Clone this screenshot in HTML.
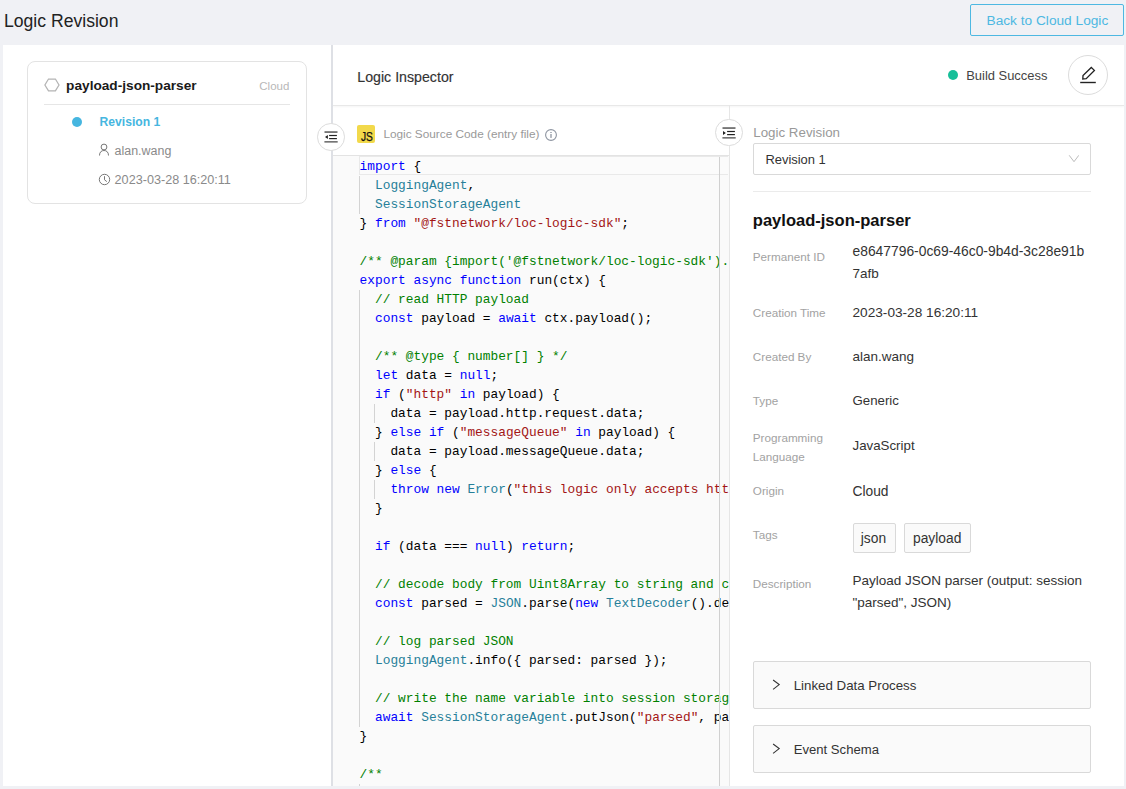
<!DOCTYPE html>
<html><head><meta charset="utf-8">
<style>
*{box-sizing:border-box;margin:0;padding:0}
html,body{width:1126px;height:789px;overflow:hidden;background:#f0f1f5;font-family:"Liberation Sans",sans-serif;color:#333}
.a{position:absolute}
.t{white-space:nowrap;line-height:1}
.code{font-family:"Liberation Mono",monospace;font-size:12.83px;line-height:19px;white-space:pre;color:#000}
.k{color:#0000ff}.c{color:#008000}.s{color:#a31515}.y{color:#267f99}
</style></head><body>
<div class="a t " style="left:4px;top:12.90px;font-size:17.6px;color:#222;">Logic Revision</div>
<div class="a" style="left:970px;top:4px;width:154px;height:32px;border:1px solid #4db8e2;border-radius:2px"></div>
<div class="a t " style="left:986.5px;top:14.20px;font-size:13.7px;color:#4db8e2;">Back to Cloud Logic</div>
<div class="a" style="left:3px;top:45px;width:328px;height:741px;background:#fff"></div>
<div class="a" style="left:331px;top:45px;width:2px;height:741px;background:#dee0e5"></div>
<div class="a" style="left:333px;top:45px;width:791px;height:741px;background:#fff"></div>
<div class="a" style="left:27px;top:61px;width:280px;height:143px;border:1px solid #e3e3e3;border-radius:8px"></div>
<svg class="a" style="left:44px;top:78px" width="16" height="14" viewBox="0 0 16 14"><path d="M4.5 1.0 L11.4 1.0 L15.0 7 L11.4 12.9 L4.5 12.9 L0.9 7 Z" fill="none" stroke="#b4b4b4" stroke-width="1.25"/></svg>
<div class="a t " style="left:66.1px;top:79.34px;font-size:13.66px;color:#1a1a1a;font-weight:bold;">payload-json-parser</div>
<div class="a t " style="left:259.3px;top:81.17px;font-size:11.5px;color:#b8b8b8;">Cloud</div>
<div class="a" style="left:44px;top:104px;width:246px;height:1px;background:#e6e6e6"></div>
<div class="a" style="left:71.8px;top:116.7px;width:10px;height:10px;background:#46b6e0;border-radius:50%"></div>
<div class="a t " style="left:99.6px;top:116.02px;font-size:12.14px;color:#46b6e0;font-weight:bold;">Revision 1</div>
<svg class="a" style="left:98px;top:143px" width="12" height="13" viewBox="0 0 12 13"><circle cx="6" cy="4" r="2.9" fill="none" stroke="#777" stroke-width="1"/><path d="M1.5 12.5 C1.5 9 3.5 7.5 6 7.5 C8.5 7.5 10.5 9 10.5 12.5" fill="none" stroke="#777" stroke-width="1"/></svg>
<div class="a t " style="left:114.6px;top:145.47px;font-size:12.44px;color:#8a8a8a;">alan.wang</div>
<svg class="a" style="left:98px;top:172.5px" width="13" height="13" viewBox="0 0 13 13"><circle cx="6.5" cy="6.5" r="5.2" fill="none" stroke="#777" stroke-width="1"/><path d="M6.5 3.2 V6.8 L8.8 8.6" fill="none" stroke="#777" stroke-width="1"/></svg>
<div class="a t " style="left:114.6px;top:174.20px;font-size:12.64px;color:#8a8a8a;">2023-03-28 16:20:11</div>
<div class="a t " style="left:357.3px;top:70.28px;font-size:14.2px;color:#333;-webkit-text-stroke:0.15px #333">Logic Inspector</div>
<div class="a" style="left:333px;top:105px;width:791px;height:1px;background:#e8e8e8;box-shadow:0 1px 2px rgba(0,0,0,0.06)"></div>
<div class="a" style="left:947.9px;top:69.9px;width:10px;height:10px;background:#17bf99;border-radius:50%"></div>
<div class="a t " style="left:966.2px;top:70.05px;font-size:12.94px;color:#444;">Build Success</div>
<div class="a" style="left:1068px;top:55px;width:40px;height:40px;border:1px solid #dcdcdc;border-radius:50%;background:#fff"></div>
<svg class="a" style="left:1078px;top:65px" width="20" height="20" viewBox="0 0 20 20"><path d="M4.8 14.0 L5.0 10.6 L13.3 2.5 L16.4 5.4 L8.2 13.6 Z" fill="none" stroke="#222" stroke-width="1.3" stroke-linejoin="miter"/><path d="M2.2 17.5 H17.8" stroke="#222" stroke-width="1.4"/></svg>
<div class="a" style="left:356.9px;top:125px;width:18px;height:18px;background:#f2d94b;border-radius:2px"></div>
<div class="a t " style="left:360.7px;top:130.57px;font-size:12.2px;color:#111;transform:scaleX(0.84);transform-origin:0 0;-webkit-text-stroke:0.25px #111">JS</div>
<div class="a t " style="left:383.4px;top:128.81px;font-size:11.8px;color:#999;">Logic Source Code (entry file)</div>
<svg class="a" style="left:545px;top:129px" width="12" height="12" viewBox="0 0 12 12"><circle cx="6" cy="6" r="5.4" fill="none" stroke="#8e95a1" stroke-width="1.1"/><rect x="5.3" y="3.0" width="1.4" height="1.0" fill="#8e95a1"/><rect x="5.35" y="5.0" width="1.3" height="3.9" fill="#8e95a1"/></svg>
<div class="a" style="left:333px;top:155px;width:396px;height:631px;background:#fafafa"></div>
<div class="a" style="left:333px;top:155px;width:396px;height:1.2px;background:#e3e3e3"></div>
<div class="a" style="left:359px;top:156px;width:369px;height:18.5px;border:1.6px solid #e9e9e9;border-right:none;background:#fbfbfb"></div>
<div class="a" style="left:333px;top:157px;width:396px;height:629px;overflow:hidden"><div class="a" style="left:26.0px;top:18.69999999999999px;width:1px;height:38px;background:#d3d3d3"></div>
<div class="a" style="left:26.0px;top:132.7px;width:1px;height:437px;background:#d3d3d3"></div>
<div class="a" style="left:41.39999999999998px;top:246.7px;width:1px;height:19px;background:#d3d3d3"></div>
<div class="a" style="left:41.39999999999998px;top:284.7px;width:1px;height:19px;background:#d3d3d3"></div>
<div class="a" style="left:41.39999999999998px;top:322.7px;width:1px;height:19px;background:#d3d3d3"></div>
<div class="a" style="left:26.0px;top:626.7px;width:1px;height:19px;background:#d3d3d3"></div>
<div class="a code" style="left:26.600000000000023px;top:-0.30000000000001137px"><span class="k">import</span> {
  <span class="y">LoggingAgent</span>,
  <span class="y">SessionStorageAgent</span>
} <span class="k">from</span> <span class="s">"@fstnetwork/loc-logic-sdk"</span>;

<span class="c">/** @param {import('@fstnetwork/loc-logic-sdk').</span>
<span class="k">export</span> <span class="k">async</span> <span class="k">function</span> run(ctx) {
  <span class="c">// read HTTP payload</span>
  <span class="k">const</span> payload = <span class="k">await</span> ctx.payload();

  <span class="c">/** @type { number[] } */</span>
  <span class="k">let</span> data = <span class="k">null</span>;
  <span class="k">if</span> (<span class="s">"http"</span> <span class="k">in</span> payload) {
    data = payload.http.request.data;
  } <span class="k">else</span> <span class="k">if</span> (<span class="s">"messageQueue"</span> <span class="k">in</span> payload) {
    data = payload.messageQueue.data;
  } <span class="k">else</span> {
    <span class="k">throw</span> <span class="k">new</span> <span class="y">Error</span>(<span class="s">"this logic only accepts http or message queue payload"</span>);
  }

  <span class="k">if</span> (data === <span class="k">null</span>) <span class="k">return</span>;

  <span class="c">// decode body from Uint8Array to string and convert to JSON</span>
  <span class="k">const</span> parsed = <span class="y">JSON</span>.parse(<span class="k">new</span> <span class="y">TextDecoder</span>().decode(<span class="k">new</span> <span class="y">Uint8Array</span>(data)));

  <span class="c">// log parsed JSON</span>
  <span class="y">LoggingAgent</span>.info({ parsed: parsed });

  <span class="c">// write the name variable into session storage</span>
  <span class="k">await</span> <span class="y">SessionStorageAgent</span>.putJson(<span class="s">"parsed"</span>, parsed);
}

<span class="c">/**</span>
<span class="c"> * @param {import('@fstnetwork/loc-logic-sdk').</span></div></div>
<div class="a" style="left:719px;top:157px;width:1px;height:629px;background:#d0d0d0"></div>
<div class="a" style="left:729px;top:105px;width:1px;height:681px;background:#e6e6e6"></div>
<div class="a" style="left:317.2px;top:123.00000000000001px;width:27.6px;height:27.6px;border:1px solid #dcdcdc;border-radius:50%;background:#fff"></div>
<svg class="a" style="left:324px;top:130.20000000000002px" width="14" height="14" viewBox="0 0 14 14"><rect x="0.5" y="1.3" width="13" height="1.5" fill="#555"/><rect x="5.1" y="4.9" width="7.8" height="1.2" fill="#222"/><rect x="5.1" y="8.0" width="7.8" height="1.2" fill="#222"/><rect x="0.4" y="11.1" width="13.3" height="1.5" fill="#666"/><path d="M1.0 7.0 L3.9 4.9 L3.9 9.1 Z" fill="#222"/></svg>
<div class="a" style="left:715.2px;top:118.89999999999999px;width:27.6px;height:27.6px;border:1px solid #dcdcdc;border-radius:50%;background:#fff"></div>
<svg class="a" style="left:722px;top:126.1px" width="14" height="14" viewBox="0 0 14 14"><rect x="0.5" y="1.3" width="13" height="1.5" fill="#555"/><rect x="5.1" y="4.9" width="7.8" height="1.2" fill="#222"/><rect x="5.1" y="8.0" width="7.8" height="1.2" fill="#222"/><rect x="0.4" y="11.1" width="13.3" height="1.5" fill="#666"/><path d="M3.9 7.0 L1.0 4.9 L1.0 9.1 Z" fill="#222"/></svg>
<div class="a t " style="left:753.3px;top:125.72px;font-size:13.33px;color:#999;">Logic Revision</div>
<div class="a" style="left:753px;top:143px;width:337.5px;height:31.5px;border:1px solid #d9d9d9;border-radius:2px;background:#fff"></div>
<div class="a t " style="left:765.4px;top:154.35px;font-size:12.94px;color:#333;">Revision 1</div>
<svg class="a" style="left:1067px;top:154px" width="12" height="8" viewBox="0 0 12 8"><path d="M2.2 1.3 L7 7.7 L11.8 1.3" fill="none" stroke="#bbb" stroke-width="1"/></svg>
<div class="a" style="left:753px;top:191px;width:337.5px;height:1px;background:#ebebeb"></div>
<div class="a t " style="left:752.8px;top:212.99px;font-size:16.55px;color:#111;font-weight:bold;">payload-json-parser</div>
<div class="a t " style="left:752.8px;top:250.80px;font-size:11.7px;color:#a2a2a2;">Permanent ID</div>
<div class="a t " style="left:852.5px;top:245.28px;font-size:13.85px;color:#333;">e8647796-0c69-46c0-9b4d-3c28e91b</div>
<div class="a t " style="left:752.8px;top:306.80px;font-size:11.7px;color:#a2a2a2;">Creation Time</div>
<div class="a t " style="left:852.5px;top:305.55px;font-size:13.65px;color:#333;">2023-03-28 16:20:11</div>
<div class="a t " style="left:752.8px;top:351.10px;font-size:11.7px;color:#a2a2a2;">Created By</div>
<div class="a t " style="left:852.5px;top:349.57px;font-size:13.5px;color:#333;">alan.wang</div>
<div class="a t " style="left:752.8px;top:395.20px;font-size:11.7px;color:#a2a2a2;">Type</div>
<div class="a t " style="left:852.5px;top:393.88px;font-size:13.25px;color:#333;">Generic</div>
<div class="a t " style="left:752.8px;top:484.70px;font-size:11.7px;color:#a2a2a2;">Origin</div>
<div class="a t " style="left:852.5px;top:484.94px;font-size:13.78px;color:#333;">Cloud</div>
<div class="a t " style="left:752.8px;top:528.80px;font-size:11.7px;color:#a2a2a2;">Tags</div>
<div class="a t " style="left:752.8px;top:578.40px;font-size:11.7px;color:#a2a2a2;">Description</div>
<div class="a t " style="left:852.5px;top:574.07px;font-size:13.5px;color:#333;">Payload JSON parser (output: session</div>
<div class="a t " style="left:852.5px;top:267.27px;font-size:13.5px;color:#333;">7afb</div>
<div class="a t " style="left:752.8px;top:432.30px;font-size:11.7px;color:#a2a2a2;">Programming</div>
<div class="a t " style="left:752.8px;top:451.10px;font-size:11.7px;color:#a2a2a2;">Language</div>
<div class="a t " style="left:852.5px;top:438.64px;font-size:13.3px;color:#333;">JavaScript</div>
<div class="a t " style="left:852.5px;top:596.07px;font-size:13.5px;color:#333;">"parsed", JSON)</div>
<div class="a" style="left:852.9px;top:523.2px;width:42.8px;height:29.8px;border:1px solid #d9d9d9;border-radius:2px;background:#fafafa"></div>
<div class="a t " style="left:860.8px;top:532.32px;font-size:13.8px;color:#333;">json</div>
<div class="a" style="left:904px;top:523.2px;width:66.8px;height:29.8px;border:1px solid #d9d9d9;border-radius:2px;background:#fafafa"></div>
<div class="a t " style="left:913px;top:532.32px;font-size:13.8px;color:#333;">payload</div>
<div class="a" style="left:753.4px;top:661.2px;width:337.3px;height:47.6px;border:1px solid #d9d9d9;border-radius:2px;background:#fafafa"></div>
<svg class="a" style="left:770px;top:679.2px" width="12" height="12" viewBox="0 0 12 12"><path d="M3.1 1.0 L9.2 5.6 L3.1 10.4" fill="none" stroke="#333" stroke-width="1.1"/></svg>
<div class="a t " style="left:793.7px;top:678.73px;font-size:13.31px;color:#333;">Linked Data Process</div>
<div class="a" style="left:753.4px;top:725.4px;width:337.3px;height:47.6px;border:1px solid #d9d9d9;border-radius:2px;background:#fafafa"></div>
<svg class="a" style="left:770px;top:743.4px" width="12" height="12" viewBox="0 0 12 12"><path d="M3.1 1.0 L9.2 5.6 L3.1 10.4" fill="none" stroke="#333" stroke-width="1.1"/></svg>
<div class="a t " style="left:793.7px;top:743.09px;font-size:13.12px;color:#333;">Event Schema</div>
</body></html>
